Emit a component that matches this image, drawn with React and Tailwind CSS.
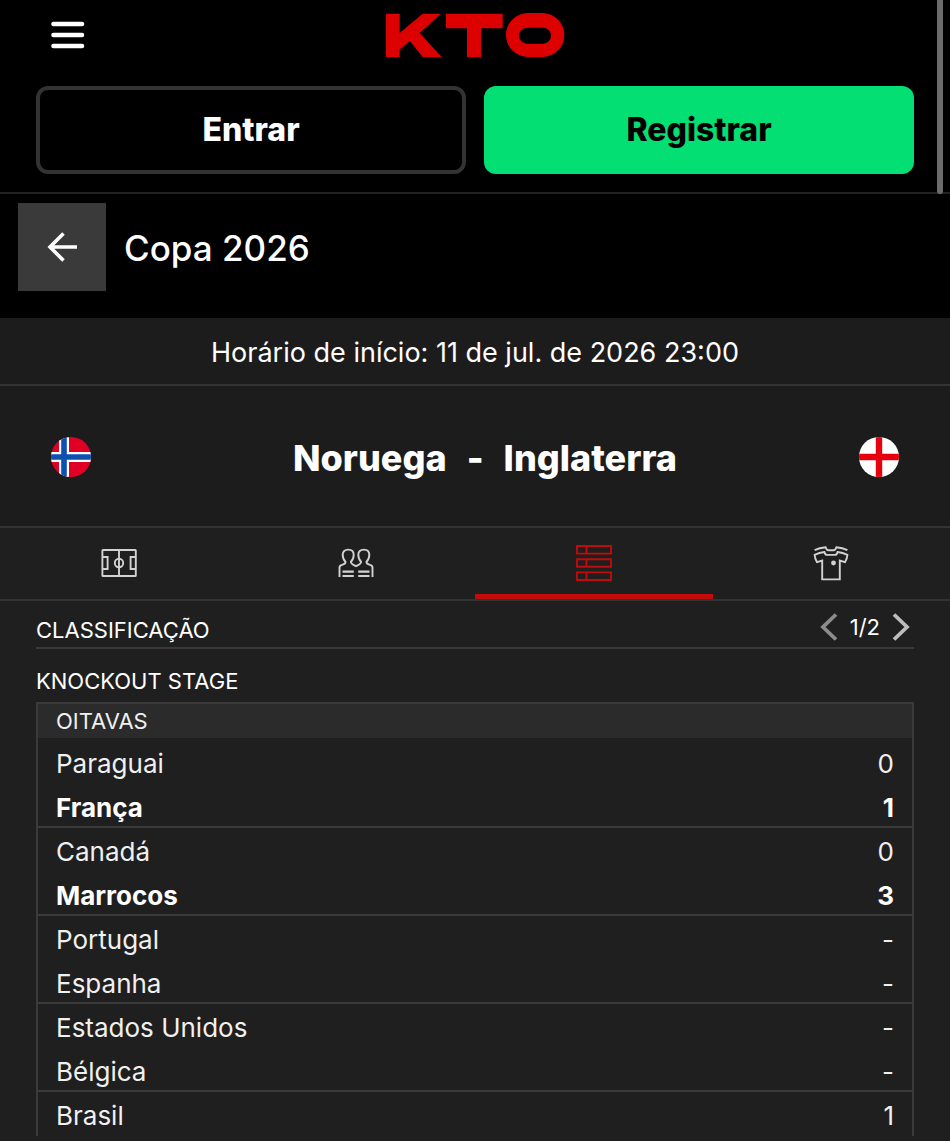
import React, { useState } from 'react';

const pairs = [
    [{ team: 'Paraguai', score: '0' }, { team: 'França', score: '1', winner: true }],
    [{ team: 'Canadá', score: '0' }, { team: 'Marrocos', score: '3', winner: true }],
    [{ team: 'Portugal', score: '-' }, { team: 'Espanha', score: '-' }],
    [{ team: 'Estados Unidos', score: '-' }, { team: 'Bélgica', score: '-' }],
    [{ team: 'Brasil', score: '1' }],
];

const Logo = () => (
    <svg viewBox="46 38 538 132" className="h-11 w-[180px]" fill="#dc0000" aria-label="KTO" role="img">
        <path d="M48 40H89V98L158 40H213L149 98L215 170H158L120 122L89 148V170H48Z" />
        <path d="M228 40H398V84H333V170H291V84H228Z" />
        <path
            fillRule="evenodd"
            d="M474 38H517A66 66 0 0 1 517 170H474A66 66 0 0 1 474 38ZM471 82A24 24 0 0 0 471 130H519A24 24 0 0 0 519 82Z"
        />
    </svg>
);

const NorwayFlag = () => (
    <svg viewBox="0 0 40 40" className="size-10" role="img" aria-label="Noruega">
        <clipPath id="norway"><circle cx="20" cy="20" r="20" /></clipPath>
        <g clipPath="url(#norway)">
            <path fill="#e00025" d="M0 0H40V40H0Z" />
            <path fill="#fff" d="M8 0H18V15H40V25H18V40H8V25H0V15H8Z" />
            <path fill="#0c50b0" d="M10.2 0H15.8V17.2H40V22.8H15.8V40H10.2V22.8H0V17.2H10.2Z" />
        </g>
    </svg>
);

const EnglandFlag = () => (
    <svg viewBox="0 0 40 40" className="size-10" role="img" aria-label="Inglaterra">
        <clipPath id="england"><circle cx="20" cy="20" r="20" /></clipPath>
        <g clipPath="url(#england)">
            <path fill="#fff" d="M0 0H40V40H0Z" />
            <path fill="#e6000d" d="M16.8 0H23.2V16.8H40V23.2H23.2V40H16.8V23.2H0V16.8H16.8Z" />
        </g>
    </svg>
);

const PitchIcon = () => (
    <svg viewBox="0 0 36 36" className="size-9" fill="none" stroke="currentColor" strokeWidth="1.9">
        <rect x="1.4" y="5" width="33.4" height="26" rx="0.6" />
        <path d="M18 5V31M1.4 12H6.6V24H1.4M34.8 12H29.6V24H34.8" />
        <circle cx="18" cy="18" r="4.2" />
    </svg>
);

const PlayersIcon = () => (
    <svg viewBox="0 0 36 36" className="size-9" fill="none" stroke="currentColor" strokeWidth="1.9">
        <path d="M1.5 32V22.5C1.5 21 2.5 20.3 4 19.9C6.3 19.2 7.8 18.7 7.5 16.8C5.3 14.8 4.7 12.5 4.7 9.8C4.7 6.5 6.8 4.6 10.2 4.6S15.7 6.5 15.7 9.8C15.7 12.5 15.1 14.8 12.9 16.8C12.7 18.5 14 19 18 21.2C22 19 23.3 18.5 23.1 16.8C20.9 14.8 20.3 12.5 20.3 9.8C20.3 6.5 22.4 4.6 25.8 4.6S31.3 6.5 31.3 9.8C31.3 12.5 30.7 14.8 28.5 16.8C28.2 18.7 29.7 19.2 32 19.9C33.5 20.3 34.5 21 34.5 22.5V32" />
        <path d="M4.5 26.6H15.8M4.5 31H15.8M20.2 26.6H31.5M20.2 31H31.5" strokeWidth="2.1" />
    </svg>
);

const StandingsIcon = () => (
    <svg viewBox="0 0 36 36" className="size-9" fill="none" stroke="currentColor" strokeWidth="1.9">
        <path d="M1 1H35V8.6H1ZM1 14.2H35V21.8H1ZM1 27.4H35V35H1Z" />
        <path d="M10.5 1V8.6M10.5 14.2V21.8M10.5 27.4V35" />
    </svg>
);

const ShirtIcon = () => (
    <svg viewBox="0 0 36 36" className="size-9" fill="none" stroke="currentColor" strokeWidth="1.9">
        <path d="M1.6 5.2C5 3.6 8.6 2.7 12.6 2.3C13.2 4.2 14 5.3 15.4 5.3H20.6C22 5.3 22.8 4.2 23.4 2.3C27.4 2.7 31 3.6 34.4 5.2" />
        <path d="M11.4 7C8 7.4 4.8 8.3 1.6 9.8C1.8 12.6 2.6 15 4 17.2L9.2 15.6V34.4H26.8V15.6L32 17.2C33.4 15 34.2 12.6 34.4 9.8C31.2 8.3 28 7.4 24.6 7C24.2 8.9 23.4 9.9 22 9.9H14C12.6 9.9 11.8 8.9 11.4 7Z" />
        <circle cx="20.5" cy="18" r="2.4" fill="currentColor" stroke="none" />
    </svg>
);

const tabs = [
    { id: 'pitch', label: 'Campo', Icon: PitchIcon },
    { id: 'players', label: 'Confrontos', Icon: PlayersIcon },
    { id: 'standings', label: 'Classificação', Icon: StandingsIcon },
    { id: 'lineups', label: 'Escalações', Icon: ShirtIcon },
];

const App = () => {
    const [activeTab, setActiveTab] = useState('standings');

    return (
        <div className="relative min-h-screen bg-[#1f1f1f] font-['Inter',sans-serif] text-white">
            {/* Scroll thumb */}
            <div className="absolute right-[7px] top-0 h-[194px] w-1.5 rounded-b-full bg-[#6c6c6c]" />

            <header className="border-b-2 border-[#222222] bg-black px-9 pb-[18px]">
                <div className="grid h-[86px] grid-cols-3 items-start pt-[13px]">
                    <button type="button" aria-label="Menu" className="flex h-11 w-16 items-center justify-center">
                        <svg viewBox="0 0 34 28" className="h-7 w-[34px]" stroke="#fff" strokeWidth="4.6" strokeLinecap="round">
                            <path d="M2.5 3H31M2.5 14H31M2.5 25H31" />
                        </svg>
                    </button>
                    <div className="flex justify-center"><Logo /></div>
                </div>
                <div className="grid grid-cols-2 gap-[18px]">
                    <button type="button" className="h-[88px] rounded-xl border-4 border-[#333333] text-[32px] font-extrabold">
                        Entrar
                    </button>
                    <button type="button" className="h-[88px] rounded-xl bg-[#03df72] text-[32px] font-extrabold text-black">
                        Registrar
                    </button>
                </div>
            </header>

            <div className="flex items-center gap-[18px] bg-black px-[18px] pb-[27px] pt-[9px]">
                <button type="button" aria-label="Voltar" className="flex size-[88px] items-center justify-center bg-[#3a3a3a]">
                    <svg viewBox="0 0 30 30" className="size-[30px]" fill="none" stroke="#fff" strokeWidth="3.6">
                        <path d="M30 15H3M16.5 1.5L3 15L16.5 28.5" />
                    </svg>
                </button>
                <h1 className="pt-0.5 text-[35px] font-medium">Copa 2026</h1>
            </div>

            <p className="flex h-[68px] items-center justify-center border-b-2 border-[#333333] bg-[#1c1c1c] pt-1 text-[27px]">
                Horário de início: 11 de jul. de 2026 23:00
            </p>

            <div className="flex h-[142px] items-center justify-between border-b-2 border-[#333333] bg-[#1c1c1c] px-[51px] pt-0.5">
                <NorwayFlag />
                <h2 className="flex gap-5 pl-5 pt-0.5 text-[36px] font-extrabold">
                    <span>Noruega</span>
                    <span>-</span>
                    <span>Inglaterra</span>
                </h2>
                <EnglandFlag />
            </div>

            <nav className="grid h-[73px] grid-cols-4 border-b-2 border-[#333333]">
                {tabs.map(({ id, label, Icon }) => (
                    <button
                        key={id}
                        type="button"
                        aria-label={label}
                        onClick={() => setActiveTab(id)}
                        className={`flex items-center justify-center border-b-[5px] pt-[3px] ${
                            activeTab === id ? 'border-[#c20b0b] text-[#c20b0b]' : 'border-transparent text-[#d2d2d2]'
                        }`}
                    >
                        <Icon />
                    </button>
                ))}
            </nav>

            <main className="px-9 pb-1.5">
                <div className="flex h-12 items-center justify-between border-b-2 border-[#3a3a3a]">
                    <h3 className="pt-3 text-[22px]">CLASSIFICAÇÃO</h3>
                    <div className="flex items-center gap-3 pr-1 pt-1.5 text-[22px]">
                        <button type="button" aria-label="Anterior" className="text-[#8c8c8c]">
                            <svg viewBox="0 0 18 28" className="h-7 w-[18px]" fill="none" stroke="currentColor" strokeWidth="3.8">
                                <path d="M16 1.5L3 14L16 26.5" />
                            </svg>
                        </button>
                        <span>1/2</span>
                        <button type="button" aria-label="Próxima" className="text-[#bdbdbd]">
                            <svg viewBox="0 0 18 28" className="h-7 w-[18px]" fill="none" stroke="currentColor" strokeWidth="3.8">
                                <path d="M2 1.5L15 14L2 26.5" />
                            </svg>
                        </button>
                    </div>
                </div>

                <h3 className="flex h-[53px] items-center pt-3 text-[22px]">KNOCKOUT STAGE</h3>

                <table className="w-full border-separate border-spacing-0 border-x-2 border-t-2 border-[#3a3a3a] text-[26px]">
                    <thead>
                        <tr>
                            <th colSpan={2} className="h-9 border-b-2 border-[#1f1f1f] bg-[#2b2b2b] px-[18px] text-left text-[22px] leading-8 font-normal text-[#f0f0f0]">
                                OITAVAS
                            </th>
                        </tr>
                    </thead>
                    {pairs.map((pair, i) => (
                        <tbody key={i}>
                            {pair.map(({ team, score, winner }, j) => {
                                const edge = j === 1 ? 'border-b-2 border-[#3a3a3a] pt-1.5' : 'pt-1';
                                return (
                                    <tr key={team} className={winner ? 'font-bold' : 'text-[#f0f0f0]'}>
                                        <td className={`h-11 pl-[18px] leading-9 ${edge}`}>{team}</td>
                                        <td className={`h-11 pr-[18px] text-right leading-9 ${edge}`}>{score}</td>
                                    </tr>
                                );
                            })}
                        </tbody>
                    ))}
                </table>
            </main>
        </div>
    );
};

export default App;
